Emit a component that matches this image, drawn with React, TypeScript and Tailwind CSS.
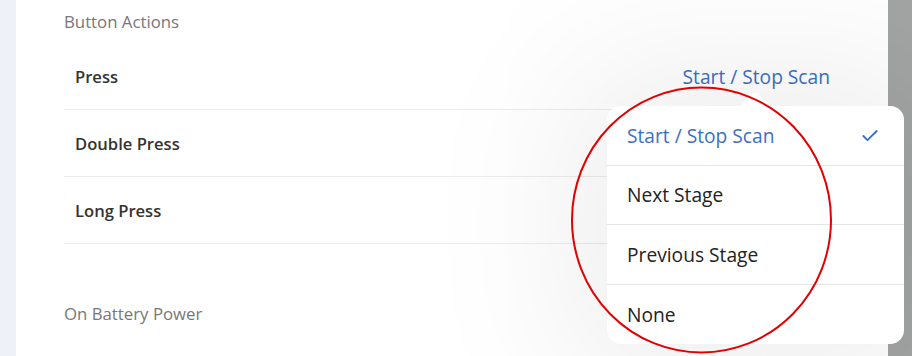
import { Check } from 'lucide-react';

const rows = ['Press', 'Double Press', 'Long Press'];

const options = ['Start / Stop Scan', 'Next Stage', 'Previous Stage', 'None'];
const selected = 'Start / Stop Scan';

function ActionRow({ label, value }: { label: string; value?: string }) {
  return (
    <div className="flex h-[67px] items-center justify-between border-b border-[#ececec] pl-[11px] pr-[58px] pt-[2px]">
      <span className="text-[16.6px] font-semibold text-[#333]">{label}</span>
      {value && <span className="text-[19.2px] text-[#3b6fc6]">{value}</span>}
    </div>
  );
}

function Popover() {
  return (
    <div className="absolute left-[607px] top-[106px] w-[297px] rounded-[14px] bg-white shadow-[0_0_160px_40px_rgba(0,0,0,0.07)]">
      <svg className="absolute -top-[14px] left-[132px]" width="32" height="15" viewBox="0 0 32 15">
        <path d="M0 15 L14 1.5 Q16 0 18 1.5 L32 15 Z" fill="#fff" />
      </svg>
      {options.map((o, i) => (
        <div
          key={o}
          className={`flex h-[59.5px] items-center justify-between pl-[20px] pr-[24px] pt-[2px] ${
            i < options.length - 1 ? 'border-b border-[#e6e6e6]' : ''
          }`}
        >
          <span className={`text-[19.2px] ${o === selected ? 'text-[#3b6fc6]' : 'text-[#222]'}`}>{o}</span>
          {o === selected && <Check className="h-[20px] w-[20px] text-[#3b6fc6]" strokeWidth={2.2} />}
        </div>
      ))}
    </div>
  );
}

export default function App() {
  return (
    <div className="relative flex h-[356px] w-[912px] overflow-hidden bg-white font-['Open_Sans','Noto_Sans',sans-serif]">
      <div className="w-4 bg-[#eef2f8]" />
      <div className="flex-1 bg-white pl-[48px] pt-[9px]">
        <div className="text-[16.8px] text-[#777]">Button Actions</div>
        <div className="mt-[9px]">
          {rows.map((r, i) => (
            <ActionRow key={r} label={r} value={i === 0 ? selected : undefined} />
          ))}
        </div>
        <div className="mt-[57px] text-[16.8px] text-[#777]">On Battery Power</div>
      </div>
      <div className="w-6 bg-[#a3a5a5]" />
      <Popover />
      <svg className="pointer-events-none absolute left-0 top-0" width="912" height="356">
        <ellipse cx="701.5" cy="220" rx="129.5" ry="132.5" fill="none" stroke="#e30000" strokeWidth="2" />
      </svg>
    </div>
  );
}
